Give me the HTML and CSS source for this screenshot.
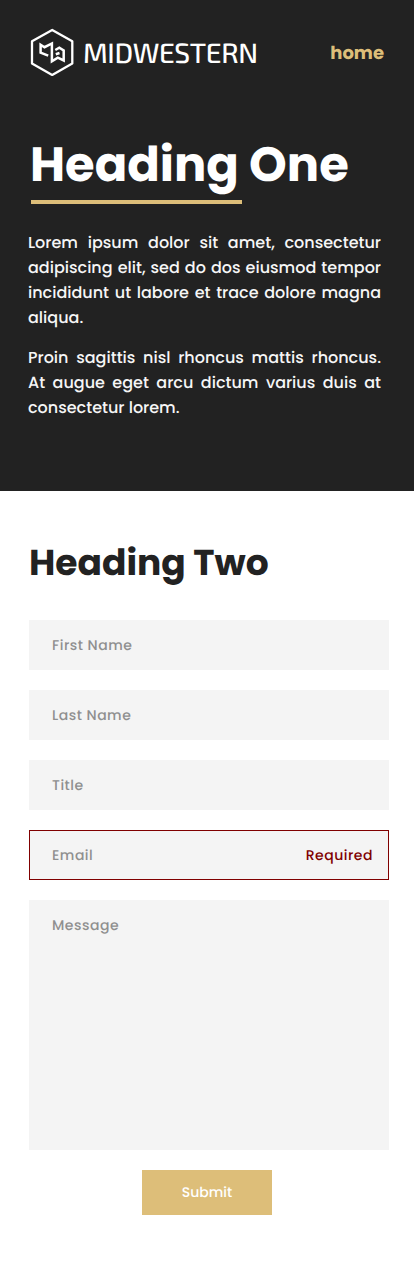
FILE: index.html
```html
<!DOCTYPE html>
<html lang="en">
<head>
<meta charset="utf-8">
<title>Midwestern</title>
<link rel="stylesheet" href="styles.css">
</head>
<body>
<header class="hero">
  <nav class="nav">
    <a class="brand" href="#">
      <svg class="logo" width="44" height="48" viewBox="0 0 44 48" fill="none" stroke="#fff" stroke-linejoin="round">
        <path d="M22.200 2 42.300 13.300V35.600L22.200 47 2 35.600V13.300Z" stroke-width="2.300"/>
        <path d="M18.200 27.600 10.600 24.700V16.700L14.500 19.200 21.900 15.500V33.300L27.800 29.700 33.700 32.500V22.500L29.300 19.700 25.300 22M25.800 26.200 29.500 25" stroke-width="2.500" stroke-linejoin="miter"/>
      </svg>
      <span class="wordmark">MIDWESTERN</span>
    </a>
    <a class="link" href="#">home</a>
  </nav>
  <h1 class="title">Heading One</h1>
  <div class="rule"></div>
  <p class="copy">Lorem ipsum dolor sit amet, consectetur adipiscing elit, sed do dos eiusmod tempor incididunt ut labore et trace dolore magna aliqua.</p>
  <p class="copy">Proin sagittis nisl rhoncus mattis rhoncus. At augue eget arcu dictum varius duis at consectetur lorem.</p>
</header>
<main class="contact">
  <h2 class="subtitle">Heading Two</h2>
  <form class="form">
    <label class="field"><input class="input" type="text" placeholder="First Name"></label>
    <label class="field"><input class="input" type="text" placeholder="Last Name"></label>
    <label class="field"><input class="input" type="text" placeholder="Title"></label>
    <label class="field invalid"><input class="input" type="email" placeholder="Email"><span class="error">Required</span></label>
    <label class="field message"><textarea class="input" placeholder="Message"></textarea></label>
    <button class="submit" type="button">Submit</button>
  </form>
</main>
</body>
</html>
```
FILE: styles.css
```css
* { box-sizing: border-box; margin: 0; }
body { background: #fff; color: #222; font-family: Poppins, Inter, sans-serif; text-rendering: geometricPrecision; }
a { text-decoration: none; }
.hero { height: 491px; padding: 28px 30px 0 28px; background: #222; color: #fff; }
.nav { display: flex; justify-content: space-between; align-items: center; height: 48px; padding-left: 2px; }
.brand { display: flex; align-items: center; gap: 9px; color: #fff; }
.logo { display: block; }
.wordmark { font: 500 28px/48px "Exo 2", Exo, "Open Sans", sans-serif; letter-spacing: -0.4px; }
.link { padding-top: 3px; color: #ddbe79; font-size: 18px; font-weight: 700; line-height: 48px; }
.title { margin-top: 53px; padding-left: 2px; font-size: 48px; font-weight: 700; line-height: 71px; white-space: nowrap; }
.rule { width: 211px; height: 4px; margin-left: 3px; background: #ddbe79; }
.copy { width: 353px; margin-top: 26px; font-size: 16px; font-weight: 500; line-height: 25px; text-align: justify; opacity: 0.96; }
.copy + .copy { margin-top: 15px; }
.contact { padding: 43px 25px 62px 29px; }
.subtitle { padding-top: 1px; font-size: 36px; font-weight: 700; line-height: 56px; white-space: nowrap; }
.form { display: grid; grid-template-columns: minmax(0, 1fr); gap: 20px; margin-top: 29px; }
.field { display: flex; height: 50px; border: 1px solid #f4f4f4; background: #f4f4f4; }
.message { height: 250px; }
.invalid { border-color: #800000; }
.input { flex: 1; min-width: 0; padding: 0 22px; border: 0; outline: 0; resize: none; background: transparent; color: #222; font: 500 14px/48px Poppins, Inter, sans-serif; letter-spacing: 0.5px; text-rendering: inherit; }
.input::placeholder { color: #8f8f8f; opacity: 1; }
.error { padding-right: 15px; color: #800000; font-size: 14px; font-weight: 500; line-height: 48px; letter-spacing: 0.5px; }
.submit { justify-self: center; width: 130px; height: 45px; margin-right: 4px; padding: 0 0 2px; border: 0; background: #ddbe79; color: #fff; font: 500 14px/44px Poppins, Inter, sans-serif; text-rendering: inherit; }
```
